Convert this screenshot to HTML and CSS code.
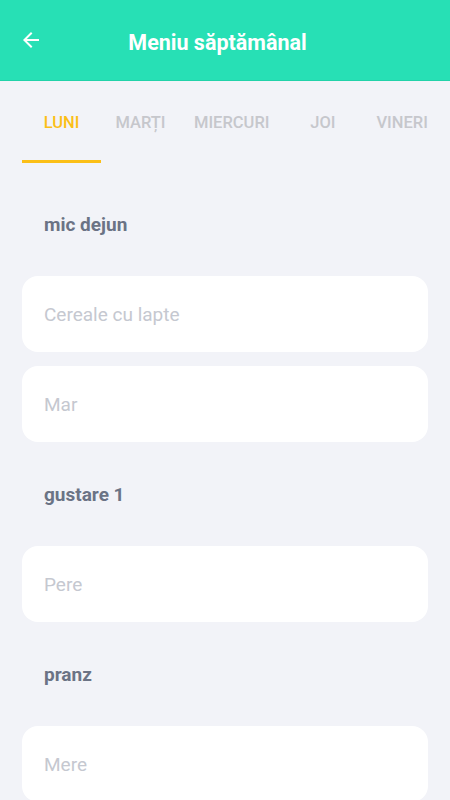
FILE: index.html
```html
<!DOCTYPE html>
<html lang="ro">
<head>
    <meta charset="UTF-8">
    <meta name="viewport" content="width=device-width, initial-scale=1.0">
    <title>Meniu săptămânal</title>
    <link rel="stylesheet" href="styles.css">
</head>
<body>
    <header class="toolbar">
        <button class="back-btn" aria-label="Înapoi">
            <svg width="24" height="24" viewBox="0 0 24 24">
                <path d="M20 11H7.83l5.59-5.59L12 4l-8 8 8 8 1.41-1.41L7.83 13H20v-2z" fill="#fff"/>
            </svg>
        </button>
        <h1 class="title">Meniu săptămânal</h1>
    </header>

    <nav class="tabs">
        <div class="tab active">LUNI</div>
        <div class="tab">MARȚI</div>
        <div class="tab">MIERCURI</div>
        <div class="tab">JOI</div>
        <div class="tab">VINERI</div>
    </nav>

    <main class="menu">
        <div class="meal-label">mic dejun</div>
        <div class="meal-card">Cereale cu lapte</div>
        <div class="meal-card">Mar</div>

        <div class="meal-label">gustare 1</div>
        <div class="meal-card">Pere</div>

        <div class="meal-label">pranz</div>
        <div class="meal-card">Mere</div>
    </main>
</body>
</html>
```

FILE: styles.css
```css
body {
    margin: 0;
    font-family: Roboto, "Noto Sans", sans-serif;
    background: #f2f3f8;
    overflow: hidden;
}

.toolbar {
    height: 80px;
    background: #27e0b5;
    display: flex;
    align-items: center;
    position: relative;
    border-bottom: 1px solid #22d2a9;
}

.back-btn {
    background: none;
    border: none;
    padding: 0;
    margin-left: 19px;
    margin-top: -1px;
    width: 24px;
    height: 24px;
    cursor: pointer;
}

.back-btn svg {
    display: block;
}

.title {
    position: absolute;
    left: 0;
    right: 15px;
    margin: 0;
    text-align: center;
    color: #fff;
    font-size: 21.5px;
    font-weight: 700;
    pointer-events: none;
    margin-top: 5px;
}

.tabs {
    display: flex;
    padding: 0 22px;
    height: 82px;
    white-space: nowrap;
    overflow: hidden;
}

.tab {
    flex-shrink: 0;
    min-width: 79px;
    padding: 0 14px;
    box-sizing: border-box;
    display: flex;
    align-items: center;
    justify-content: center;
    font-size: 16.5px;
    font-weight: 500;
    color: #c6c7cc;
    border-bottom: 3px solid transparent;
    padding-top: 4px;
}

.tab.active {
    color: #fbbf18;
    border-bottom-color: #fbbf18;
}

.menu {
    padding: 23px 22px 0;
    display: flex;
    flex-direction: column;
    gap: 14px;
}

.meal-label {
    height: 76px;
    display: flex;
    align-items: center;
    padding-left: 22px;
    font-size: 19px;
    font-weight: 700;
    color: #6b7385;
}

.meal-card {
    height: 76px;
    flex-shrink: 0;
    background: #fff;
    border-radius: 16px;
    display: flex;
    align-items: center;
    padding-left: 22px;
    font-size: 19px;
    color: #c5c8d0;
}
```
